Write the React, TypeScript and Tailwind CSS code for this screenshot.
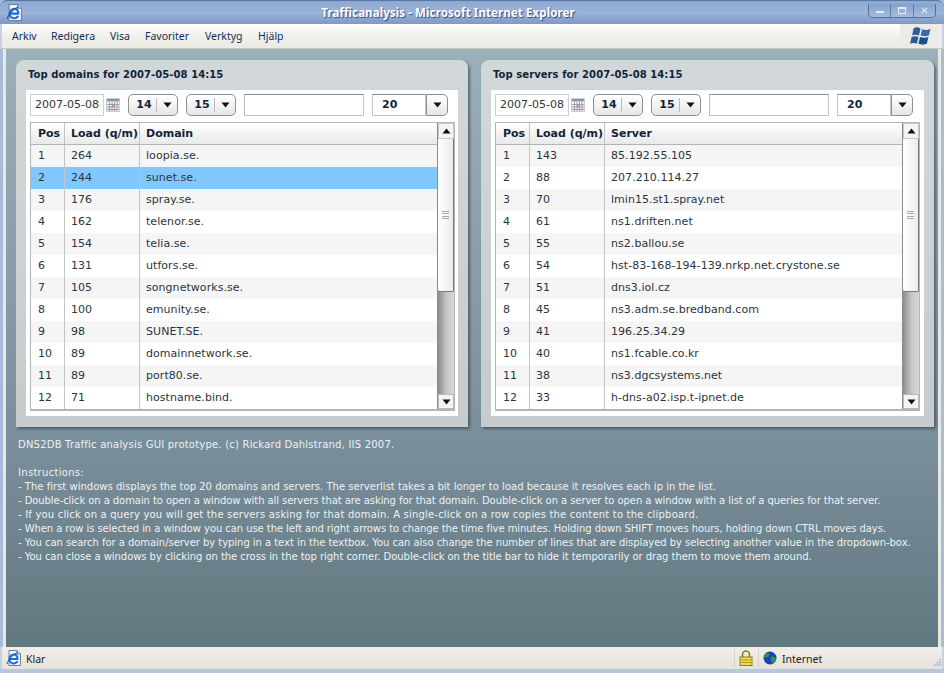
import React from "react";

const domains: [string, string][] = [["264","loopia.se."],["244","sunet.se."],["176","spray.se."],["162","telenor.se."],["154","telia.se."],["131","utfors.se."],["105","songnetworks.se."],["100","emunity.se."],["98","SUNET.SE."],["89","domainnetwork.se."],["89","port80.se."],["71","hostname.bind."]];
const servers: [string, string][] = [["143","85.192.55.105"],["88","207.210.114.27"],["70","lmin15.st1.spray.net"],["61","ns1.driften.net"],["55","ns2.ballou.se"],["54","hst-83-168-194-139.nrkp.net.crystone.se"],["51","dns3.iol.cz"],["45","ns3.adm.se.bredband.com"],["41","196.25.34.29"],["40","ns1.fcable.co.kr"],["38","ns3.dgcsystems.net"],["33","h-dns-a02.isp.t-ipnet.de"]];
const lines: [string, string][] = [
 ["DNS2DB Traffic analysis GUI prototype. (c) Rickard Dahlstrand, IIS 2007.", "tracking-[0.21px]"],
 ["\u00a0", ""],
 ["Instructions:", "tracking-[0.3px]"],
 ["- The first windows displays the top 20 domains and servers. The serverlist takes a bit longer to load because it resolves each ip in the list.", "tracking-[0.014px]"],
 ["- Double-click on a domain to open a window with all servers that are asking for that domain. Double-click on a server to open a window with a list of a queries for that server.", "tracking-[-0.073px]"],
 ["- If you click on a query you will get the servers asking for that domain. A single-click on a row copies the content to the clipboard.", "tracking-[0.19px]"],
 ["- When a row is selected in a window you can use the left and right arrows to change the time five minutes. Holding down SHIFT moves hours, holding down CTRL moves days.", "tracking-[-0.07px]"],
 ["- You can search for a domain/server by typing in a text in the textbox. You can also change the number of lines that are displayed by selecting another value in the dropdown-box.", "tracking-[-0.044px]"],
 ["- You can close a windows by clicking on the cross in the top right corner. Double-click on the title bar to hide it temporarily or drag them to move them around.", "tracking-[-0.05px]"],
];
const Tri = ({ up = false }: { up?: boolean }) => (
  <svg width="9" height="6" viewBox="0 0 9 6"><path d={up ? "M4.5 0.5 L8.5 5.5 H0.5 Z" : "M0.5 0.5 H8.5 L4.5 5.5 Z"} fill="#111" /></svg>
);
const Ie = ({ size = 16 }: { size?: number }) => (
  <svg width={size} height={size} viewBox="0 0 16 16" className="shrink-0">
    <path d="M3 0.5 H11 L14.5 4 V15.5 H3 Z" fill="#f4f6fa" stroke="#6f7f95" />
    <path d="M11 0.5 V4 H14.5" fill="#d5dbe6" stroke="#6f7f95" />
    <path d="M4 9 H11.5 C11.5 6 10 4.5 7.8 4.5 C5.4 4.5 3.4 6.4 3.4 9 C3.4 11.6 5.4 13.4 7.8 13.4 C9.5 13.4 10.8 12.6 11.4 11.2" fill="none" stroke="#1c6fe0" strokeWidth="2" />
    <path d="M1 14 C2 10 7 4 12 2.5" fill="none" stroke="#1a4fb0" strokeWidth="1" />
  </svg>
);
const Calendar = () => (
  <svg width="14" height="14" viewBox="0 0 14 14" className="shrink-0">
    <rect x="0" y="0" width="14" height="14" fill="#c9ccd2" />
    <rect x="1" y="1" width="12" height="2" fill="#7f93b5" />
    <rect x="1" y="4" width="12" height="9" fill="#f4f4f4" />
    <path d="M1 6.5h12M1 9h12M1 11.5h12M3.5 4v9M6 4v9M8.5 4v9M11 4v9" stroke="#8a8f99" strokeWidth="0.8" />
    <rect x="6" y="6.5" width="2.5" height="2.5" fill="#e77" />
  </svg>
);
const Drop = ({ v, w }: { v: string; w: string }) => (
  <div className={`${w} h-[22px] flex items-center rounded-[5px] border border-[#8f8f8f] bg-gradient-to-b from-white to-[#e6e6e6] shrink-0`}>
    <span className="flex-1 text-center font-bold text-[#10243a] pl-[3px]">{v}</span>
    <span className="h-[14px] border-l border-[#bbb]" />
    <span className="w-[20px] flex justify-center"><Tri /></span>
  </div>
);
const Scroll = () => (
  <div className="w-[17px] shrink-0 flex flex-col border-l border-[#8b8b8b] bg-gradient-to-r from-[#8c8c8c] via-[#c4c4c4] to-[#d8d8d8]">
    <div className="h-[16px] shrink-0 bg-[#f4f4f4] border border-[#c8c8c8] flex items-center justify-center"><Tri up /></div>
    <div className="h-[153px] shrink-0 bg-gradient-to-r from-white to-[#ececec] border-b border-r border-[#777] rounded-b-[2px] flex items-center justify-center">
      <div className="w-[7px] h-[9px] flex flex-col justify-between">
        {[0,1,2,3].map(i => <div key={i} className="h-px bg-[#aaa]" />)}
      </div>
    </div>
    <div className="flex-1" />
    <div className="h-[15px] shrink-0 bg-[#f4f4f4] border border-[#bbb] flex items-center justify-center"><Tri /></div>
  </div>
);
const Panel = ({ title, col, rows, sel, width }: { title: string; col: string; rows: [string,string][]; sel?: number; width: string }) => (
  <div className={`${width} h-[367px] shrink-0 rounded-t-[8px] bg-gradient-to-b from-[#d2d7da] to-[#c6cbce] px-[10px] pb-[11px] flex flex-col shadow-[2px_2px_3px_rgba(40,50,60,0.55)]`}>
    <div className="h-[30px] shrink-0 flex items-center pl-[2px] pb-px font-bold text-[#10243a] text-[10px] tracking-[0.07px]">{title}</div>
    <div className="flex-1 bg-white px-[4px] pt-[4px] pb-[4px] flex flex-col min-h-0">
      <div className="flex items-center h-[22px] shrink-0">
        <div className="w-[74px] h-[22px] border border-[#cfcfcf] flex items-center justify-center text-[#333] text-[11px] shrink-0">2007-05-08</div>
        <div className="ml-[2px] mr-[8px]"><Calendar /></div>
        <Drop v="14" w="w-[50px]" />
        <div className="w-[8px] shrink-0" />
        <Drop v="15" w="w-[50px]" />
        <div className="w-[8px] shrink-0" />
        <div className="w-[120px] h-[22px] shrink-0 border border-[#c4c4c4] border-t-[#8a8a8a] border-l-[#bbb]" />
        <div className="w-[8px] shrink-0" />
        <div className="w-[54px] h-[22px] shrink-0 border border-[#c4c4c4] border-t-[#8a8a8a] font-bold text-[#10243a] flex items-center pl-[9px]">20</div>
        <div className="w-[22px] h-[22px] shrink-0 rounded-r-[5px] border border-[#8f8f8f] bg-gradient-to-b from-white to-[#e6e6e6] flex items-center justify-center"><Tri /></div>
      </div>
      <div className="mt-[6px] w-[425px] h-[289px] border border-[#b4b4b4] border-b-2 flex min-h-0">
        <div className="flex-1 min-w-0 flex flex-col">
          <div className="h-[22px] shrink-0 flex items-center font-bold text-[#10243a] bg-gradient-to-b from-white to-[#e9e9e9] border-b border-[#b4b4b4]">
            <span className="w-[34px] h-full flex items-center pl-[7px] pt-px border-r border-[#c4c4c4] shrink-0">Pos</span>
            <span className="w-[75px] h-full flex items-center pl-[6px] pt-px border-r border-[#c4c4c4] shrink-0 whitespace-nowrap">Load (q/m)</span>
            <span className="pl-[6px] pt-px">{col}</span>
          </div>
          {rows.map((r, i) => (
            <div key={i} className={`h-[22px] shrink-0 flex items-center text-[#2c3440] ${sel === i ? "bg-[#80c8ff]" : i % 2 === 0 ? "bg-[#f5f5f5]" : "bg-white"}`}>
              <span className="w-[34px] h-full flex items-center pl-[7px] border-r border-[#c4c4c4] shrink-0">{i + 1}</span>
              <span className="w-[75px] h-full flex items-center pl-[6px] border-r border-[#c4c4c4] shrink-0">{r[0]}</span>
              <span className="pl-[6px] whitespace-nowrap tracking-[0.05px]">{r[1]}</span>
            </div>
          ))}
        </div>
        <Scroll />
      </div>
    </div>
  </div>
);

export default function App() {
  return (
    <div className="w-[944px] h-[673px] flex flex-col overflow-hidden bg-[#a9bbdc] text-[11px]" style={{ fontFamily: '"DejaVu Sans", sans-serif' }}>
      <div className="h-[24px] shrink-0 relative flex items-center justify-center pr-[48px] rounded-t-[7px] bg-gradient-to-b from-[#8ea8d0] via-[#9db3da] to-[#7f99c4] border-t border-[#5578a8]">
        <div className="absolute left-[6px] top-[3px]"><Ie size={17} /></div>
        <span className="text-white font-bold text-[11.5px] tracking-[0.1px] [text-shadow:1px_1px_1px_#2a4a80]" style={{ fontFamily: '"Noto Sans", sans-serif' }}>Trafficanalysis - Microsoft Internet Explorer</span>
        <div className="absolute right-[8px] top-[3px] w-[68px] h-[14px] flex rounded-b-[5px] border border-t-0 border-[#4f6f9f] bg-gradient-to-b from-[#86a2cd] to-[#a5bce0]">
          <div className="flex-1 flex items-center justify-center border-r border-[#5c7cab]"><div className="w-[8px] h-[2px] bg-[#e8eef7] mt-[3px]" /></div>
          <div className="flex-1 flex items-center justify-center border-r border-[#5c7cab]"><div className="w-[8px] h-[7px] border border-t-2 border-[#e8eef7]" /></div>
          <div className="flex-1 flex items-center justify-center text-[#e8eef7] font-bold text-[10px] leading-none">✕</div>
        </div>
      </div>
      <div className="h-[25px] shrink-0 flex items-center bg-gradient-to-b from-white via-[#f1f0ec] via-50% to-[#eceae5] border-b border-[#c9c6bb] pl-[10px] text-[#10305a] text-[10.5px] border-x-2 border-x-[#c7d0e4]" style={{ fontFamily: '"Noto Sans", sans-serif' }}>
        <span className="w-[39px] pt-[2px]">Arkiv</span>
        <span className="w-[59px] pt-[2px]">Redigera</span>
        <span className="w-[35px] pt-[2px]">Visa</span>
        <span className="w-[60px] pt-[2px]">Favoriter</span>
        <span className="w-[53px] pt-[2px]">Verktyg</span>
        <span className="pt-[2px]">Hjälp</span>
        <div className="ml-auto w-[42px] h-full bg-[#ecebe5] flex items-center justify-start pl-[8px]">
          <svg width="24" height="21" viewBox="0 0 22 20">
            <path d="M5 2 C8 0.5 10 1.5 11.5 2.5 L10 9 C8 8 5.5 8 3.5 9 Z" fill="#2f5f9e" />
            <path d="M13 3 C15.5 4 18 4 21 2.5 L19.5 9 C17 10 14.5 10 11.5 9 Z" fill="#3a6aaa" />
            <path d="M3 10.5 C5 9.5 7.5 9.5 9.5 10.5 L8 17 C6 16 3.5 16 1.5 17 Z" fill="#2c5a98" />
            <path d="M11 10.5 C13.5 11.5 16.5 11.5 19 10.5 L17.5 17 C15 18 12.5 18 9.5 17 Z" fill="#1f4f8e" />
          </svg>
        </div>
      </div>
      <div className="h-[598px] shrink-0 border-x-[3px] border-x-[#a9bbdc]">
        <div className="h-full bg-gradient-to-b from-[#9bb1b9] via-[#7a8f9c] via-65% to-[#62787f] border-x-[3px] border-x-[#e9e8e1] pl-[10px] pt-[11px] flex flex-col">
          <div className="flex gap-[13px]">
            <Panel title="Top domains for 2007-05-08 14:15" col="Domain" rows={domains} sel={1} width="w-[452px]" />
            <Panel title="Top servers for 2007-05-08 14:15" col="Server" rows={servers} width="w-[453px]" />
          </div>
          <div className="mt-[11px] pl-[2px] text-[#eef1f2] text-[10px] leading-[14px] whitespace-nowrap">
            {lines.map(([l, t], i) => <div key={i} className={t}>{l}</div>)}
          </div>
        </div>
      </div>
      <div className="h-[22px] shrink-0 flex items-center bg-gradient-to-b from-[#f1efe8] to-[#e6e3da] pl-[4px] text-[#222] text-[10.5px] border-x-2 border-x-[#c7d0e4]" style={{ fontFamily: '"Noto Sans", sans-serif' }}>
        <Ie size={16} />
        <span className="ml-[4px] pt-[3px]">Klar</span>
        <div className="ml-auto flex items-center h-full">
          <div className="w-px h-[18px] bg-[#d6d3c9] mr-[4px]" />
          <svg width="14" height="16" viewBox="0 0 14 16">
            <path d="M3.5 7V4.5a3.5 3.5 0 0 1 7 0V7" fill="none" stroke="#8c7a20" strokeWidth="1.6" />
            <rect x="1" y="7" width="12" height="8.5" fill="#f2dc4e" stroke="#8c7a20" />
            <path d="M2 10h10M2 12.5h10" stroke="#a8962c" />
          </svg>
          <div className="w-px h-[18px] bg-[#d6d3c9] ml-[5px] mr-[4px]" />
          <svg width="14" height="14" viewBox="0 0 14 14">
            <circle cx="7" cy="7" r="6.5" fill="#1a3fc0" />
            <path d="M3 2.5 C6 1 7 3 6 5 C5 7 3 6 1.5 7 C1 5 1.5 3.5 3 2.5Z M8 6 C10 5 13 6 13 8 C12 11 10 12 9 12 C8 10 7 8 8 6Z" fill="#2b9a3c" />
          </svg>
          <span className="ml-[5px] w-[151px] pt-[3px]">Internet</span>
          <svg width="9" height="9" viewBox="0 0 10 10" className="mt-[8px]"><path d="M7 1h2v2H7zM4 4h2v2H4zM7 4h2v2H7zM1 7h2v2H1zM4 7h2v2H4zM7 7h2v2H7z" fill="#a9bbd4" /></svg>
        </div>
      </div>
      <div className="flex-1 bg-[#b9c7de]" />
    </div>
  );
}
